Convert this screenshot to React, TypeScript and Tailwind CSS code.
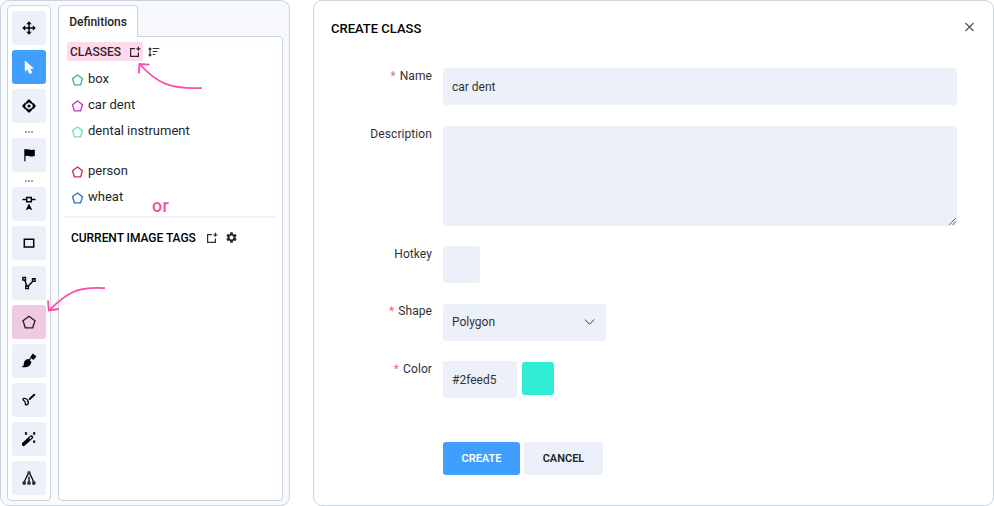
import type { ReactNode } from 'react';
import { MdSettings } from 'react-icons/md';

function Tool({ children, tone = 'bg-[#ecf1f9] text-black' }: { children: ReactNode; tone?: string }) {
  return (
    <button className={`flex size-[34px] shrink-0 items-center justify-center rounded-[3px] ${tone}`}>
      {children}
    </button>
  );
}

function Glyph({ children }: { children: ReactNode }) {
  return (
    <svg width="34" height="34" viewBox="0 0 34 34" fill="none" stroke="currentColor" strokeWidth="1.5">
      {children}
    </svg>
  );
}

function Dots() {
  return (
    <div className="flex h-[15.200px] w-[34px] shrink-0 items-center justify-center gap-px pt-[3px]">
      <i className="size-[2px] bg-[#a3a3a3]" />
      <i className="size-[2px] bg-[#a3a3a3]" />
      <i className="size-[2px] bg-[#a3a3a3]" />
    </div>
  );
}

function Toolbar() {
  return (
    <div className="flex w-[44px] shrink-0 flex-col items-center rounded-[4px] border border-[#c9d4dd] bg-white pt-[5px]">
      <div className="flex flex-col gap-[5px]">
        <Tool>
          <Glyph>
            <path d="M17 12v10M12 17h10" />
            <path d="M17 10.200l2.800 3h-5.600zM17 23.800l2.800-3h-5.600zM10.200 17l3-2.800v5.600zM23.800 17l-3-2.800v5.600z" fill="currentColor" stroke="none" />
          </Glyph>
        </Tool>
        <Tool tone="bg-[#409eff] text-white">
          <Glyph>
            <path d="M13 10.800v10.500l2.400-2 2 4.300 2.600-1-2-4.200h3.600z" fill="currentColor" stroke="currentColor" strokeWidth=".4" />
          </Glyph>
        </Tool>
        <Tool>
          <Glyph>
            <path
              d="M17 10.200l3 2.800v1.600h-1.200L17 13.300l-1.800 1.300H14V13zM17 23.800l3-2.800v-1.600h-1.200L17 20.700l-1.800-1.300H14V21zM10.200 17l2.400-3h1.300v1.200L12.900 17l1 1.800V20h-1.300zM23.800 17l-2.400-3h-1.300v1.200l1 1.800-1 1.800V20h1.300z"
              fill="currentColor"
              stroke="currentColor"
              strokeWidth=".3"
            />
            <circle cx="17" cy="17" r="1.500" fill="currentColor" stroke="none" />
          </Glyph>
        </Tool>
      </div>
      <Dots />
      <Tool>
        <Glyph>
          <path d="M12.900 11v12.300" strokeWidth="1.200" />
          <path d="M13 11.800c3.500-1.500 4.500 1.300 9.800-.2v6.500c-4.700 1.500-5.800-1.500-9.800.1z" fill="currentColor" stroke="none" />
        </Glyph>
      </Tool>
      <Dots />
      <div className="flex flex-col gap-[5.100px]">
        <Tool>
          <Glyph>
            <path d="M10.500 12.500h4M19.500 12.500h4M14.700 10.500h4.600v4.200h-4.600z" />
            <path d="M17 16.500l3.400 6.800-3.400-1.600-3.400 1.600z" fill="currentColor" stroke="none" />
          </Glyph>
        </Tool>
        <Tool>
          <Glyph>
            <path d="M12.300 13.300h9.400v7.700h-9.400z" />
          </Glyph>
        </Tool>
        <Tool>
          <Glyph>
            <path d="M10.900 11.400h2.600v2.600h-2.600zM20.500 12.800h2.600v2.600h-2.600zM13.800 20h2.600v2.600h-2.600zM12.800 14l2 6M20.800 15.300l-4.800 5" strokeWidth="1.400" />
          </Glyph>
        </Tool>
        <Tool tone="bg-[#efcae3] text-[#30152b]">
          <Glyph>
            <path d="M17 11.300l6 4.400-2.300 7.100h-7.400L11 15.700z" strokeWidth="1.300" />
          </Glyph>
        </Tool>
        <Tool>
          <Glyph>
            <path d="M20.900 9.600l3.500 3-3 3.500-3.300-2.900z" fill="currentColor" stroke="none" />
            <path d="M16.400 15l3 2.700c-.4 4.400-4.500 6.200-10 5.300 3.400-.8 1.800-3.200 3-5.400.8-1.500 2.200-2.300 4-2.600z" fill="currentColor" stroke="none" />
            <path d="M18.800 14.200l-2 2.200" strokeWidth="1.200" />
          </Glyph>
        </Tool>
        <Tool>
          <Glyph>
            <path d="M22.300 11.700l-4.600 4.300" strokeWidth="1.900" strokeLinecap="round" />
            <path d="M15.700 17.300c-1-1.600-4.200-2.800-4.700-1.200-.4 1.700 2.800 2.200 2.300 3.700-.3 1 0 2.200 2 2M15.700 17.300c1 1.600.6 3.500-.4 4.500" strokeWidth="1.300" />
          </Glyph>
        </Tool>
        <Tool>
          <Glyph>
            <path d="M11.700 22.200l7.700-7" strokeWidth="3.700" strokeLinecap="round" />
            <path d="M17.700 16.700l1.700-1.600" stroke="#ecf1f9" strokeWidth="1.400" />
            <path d="M13 10.500l2 2M15 10.500l-2 2M21.200 10.500l2 2M23.200 10.500l-2 2M21.200 18.600l2 2M23.200 18.600l-2 2" strokeWidth="1.200" />
          </Glyph>
        </Tool>
        <Tool>
          <Glyph>
            <path d="M17 15.500V22M16 13l-1.700 3.500-2.300 5M18 13l1.700 3.500 2.300 5" strokeWidth="1.300" />
            <circle cx="17" cy="12" r="1.900" fill="#444" stroke="none" />
            <circle cx="12.200" cy="22" r="1.900" fill="#333" stroke="none" />
            <circle cx="17" cy="22" r="1.900" fill="#333" stroke="none" />
            <circle cx="21.800" cy="22" r="1.900" fill="#333" stroke="none" />
          </Glyph>
        </Tool>
      </div>
    </div>
  );
}

function AddIcon() {
  return (
    <svg width="12" height="12" viewBox="0 0 12 12" fill="none" stroke="currentColor" strokeWidth="1.200">
      <path d="M6 2.600H1.600v7.800h7.800V6.500M9.400.8v4M7.400 2.800h4" />
    </svg>
  );
}

function SortIcon() {
  return (
    <svg width="12" height="10" viewBox="0 0 12 10" fill="none" stroke="#303133" strokeWidth="1.200">
      <path d="M2 1v8M.6 2.400L2 1l1.400 1.400M.6 7.600L2 9l1.400-1.400M4.700 1.500h6.600M4.700 4.500h4.600M4.700 7.500h2.600" />
    </svg>
  );
}

function ClassRow({ name, stroke, className = '' }: { name: string; stroke: string; className?: string }) {
  return (
    <li className={`flex h-[26px] items-center pl-[12px] ${className}`}>
      <svg width="12" height="12" viewBox="0 0 12 12" fill="none" stroke={stroke} strokeWidth="1.300" className="mt-px">
        <path d="M6.500 1l5 3.800-1.900 6H3.400L1.500 4.800z" />
      </svg>
      <span className="ml-[5px] text-[13px] leading-[26px] text-[#24262b]">{name}</span>
    </li>
  );
}

function Definitions() {
  return (
    <div className="flex w-[225px] flex-col">
      <div className="z-10 -mb-px flex h-[32px] w-[80px] items-center justify-center rounded-t-[4px] border border-b-0 border-[#c9d4dd] bg-white text-[12px] font-medium text-[#222]">
        Definitions
      </div>
      <div className="flex-1 rounded-[4px] rounded-tl-none border border-[#c9d4dd] bg-white">
        <div className="flex pt-[5px] pl-[8px]">
          <div className="flex h-[19px] w-[76px] items-center justify-between rounded-[2px] bg-[#fedbec] pr-[2.500px] pl-[3px] text-[12px] font-medium text-[#3c1b2d]">
            CLASSES
            <AddIcon />
          </div>
          <div className="ml-[5px] flex items-center">
            <SortIcon />
          </div>
        </div>
        <ul className="pt-[5px]">
          <ClassRow name="box" stroke="#2fb985" />
          <ClassRow name="car dent" stroke="#cb2fc6" />
          <ClassRow name="dental instrument" stroke="#62e3c1" />
          <ClassRow name="person" stroke="#cf3040" className="mt-[14px]" />
          <ClassRow name="wheat" stroke="#2f6fce" />
        </ul>
        <div className="mt-[6px] ml-[5px] h-[2px] w-[212px] bg-[#f1f4f9]" />
        <div className="mt-[10px] flex h-[20px] items-center pl-[12px] text-[12px] font-medium text-black">
          <span className="w-[125px] whitespace-nowrap tracking-[-0.040px]">CURRENT IMAGE TAGS</span>
          <span className="-mt-px ml-[9.500px] text-[#303133]">
            <AddIcon />
          </span>
          <MdSettings size={13} className="-mt-[2px] ml-[7.500px] text-[#25272c]" />
        </div>
      </div>
    </div>
  );
}

function Field({ label, required, className, children }: { label: string; required?: boolean; className: string; children: ReactNode }) {
  return (
    <div className={`flex ${className}`}>
      <div className="w-[101px] shrink-0 text-right text-[12px] leading-[16px] tracking-[0.080px] text-[#303133]">
        {required && <span className="mr-[4px] text-[#f56c6c]">*</span>}
        {label}
      </div>
      <div className="ml-[11px] flex flex-1">{children}</div>
    </div>
  );
}

function CreateClass() {
  return (
    <section className="h-[506px] w-[681px] rounded-[9px] border border-[#c9d4dd] bg-white pt-[19px] pl-[17px]">
      <header className="flex h-[18px] items-center justify-between pr-[19px]">
        <h1 className="text-[13px] font-medium text-black">CREATE CLASS</h1>
        <svg width="10" height="10" viewBox="0 0 10 10" stroke="#4d4f53" strokeWidth="1.100" className="-mt-[4px]">
          <path d="M1.500 1l8 8M9.500 1l-8 8" />
        </svg>
      </header>
      <form className="flex flex-col pt-[30px] text-[12px] text-[#303133]">
        <Field label="Name" required className="h-[57.500px]">
          <div className="flex h-[37px] w-[514px] items-center rounded-[3px] bg-[#ecf1f9] pl-[9px]">car dent</div>
        </Field>
        <Field label="Description" className="h-[120px]">
          <div className="flex h-[100px] w-[514px] items-end justify-end rounded-[3px] bg-[#ecf1f9]">
            <svg width="9" height="9" viewBox="0 0 9 9" stroke="#666" strokeWidth="1">
              <path d="M1 8L8 1M4.500 8L8 4.500" />
            </svg>
          </div>
        </Field>
        <Field label="Hotkey" className="h-[57.500px]">
          <div className="mt-[0.500px] size-[37px] rounded-[3px] bg-[#ecf1f9]" />
        </Field>
        <Field label="Shape" required className="h-[58px]">
          <div className="mt-[0.500px] flex h-[37px] w-[163px] items-center justify-between rounded-[3px] bg-[#ecf1f9] pr-[11px] pl-[9px]">
            Polygon
            <svg width="11" height="8" viewBox="0 0 11 8" fill="none" stroke="#303133" strokeWidth="1">
              <path d="M.8 1.500l4.700 4.700 4.700-4.700" />
            </svg>
          </div>
        </Field>
        <Field label="Color" required className="h-[80.500px]">
          <div className="flex h-[37px] w-[74px] items-center rounded-[3px] bg-[#ecf1f9] pl-[9px]">#2feed5</div>
          <div className="mt-px ml-[5px] h-[33px] w-[32px] rounded-[3px] bg-[#2feed5]" />
        </Field>
        <div className="flex gap-[4px] pl-[112px] text-[11px] font-semibold">
          <button type="button" className="h-[33px] w-[77px] rounded-[3px] bg-[#409eff] pt-[2px] text-white">CREATE</button>
          <button type="button" className="h-[33px] w-[79px] rounded-[3px] bg-[#ecf1f9] pt-[2px] text-[#222429]">CANCEL</button>
        </div>
      </form>
    </section>
  );
}

export default function App() {
  return (
    <main className="relative flex h-[506px] w-[994px] gap-[23px] overflow-hidden bg-white font-['Roboto',sans-serif]">
      <section className="flex h-[506px] w-[290px] gap-[7px] rounded-[9px] border border-[#c9d4dd] bg-[#f7f9fd] pt-[4px] pb-[4px] pl-[6px]">
        <Toolbar />
        <Definitions />
      </section>
      <CreateClass />
      <span className="absolute top-[194px] left-[152px] z-20 text-[18px] leading-[24px] font-medium tracking-[0.400px] text-[#fa4da4]">or</span>
      <svg className="absolute top-[60px] left-[134px] z-20" width="72" height="32" fill="none" stroke="#fa4da4" strokeWidth="1.800">
        <path d="M67.500 28C35 29.500 22 22 5.500 4M4.800 13.500L5.500 4l10 .7" />
      </svg>
      <svg className="absolute top-[284px] left-[44px] z-20" width="66" height="32" fill="none" stroke="#fa4da4" strokeWidth="1.800">
        <path d="M61 4.200C33 2.500 23 8.500 5 26.500M4 16.500l.8 10 10-1.500" />
      </svg>
    </main>
  );
}
